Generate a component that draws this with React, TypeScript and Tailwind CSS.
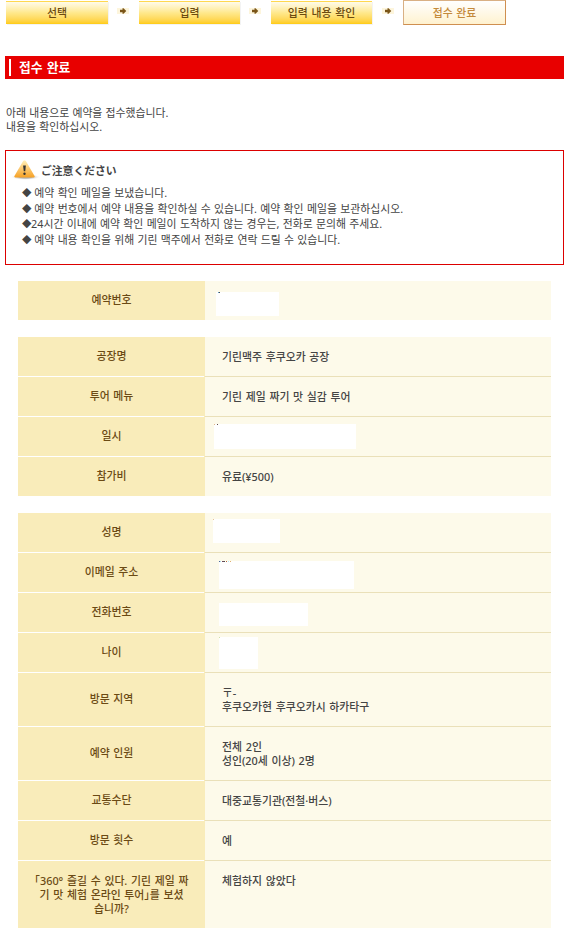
import { clsx } from "clsx"

type Speck = { x: number; w: number; fill: string }

type Row = {
  label: string[]
  lines?: string[]
  mask?: string
  specks?: Speck[]
  height: string
  top?: boolean
}

const reservation: Row[] = [
  {
    label: ["예약번호"],
    mask: "ml-[11px] mt-[11px] w-[63px] h-6",
    specks: [{ x: 2, w: 1, fill: "#5f9dc4" }, { x: 3, w: 1, fill: "#4b4b4b" }],
    height: "h-[39px]",
  },
]

const tour: Row[] = [
  { label: ["공장명"], lines: ["기린맥주 후쿠오카 공장"], height: "h-10" },
  { label: ["투어 메뉴"], lines: ["기린 제일 짜기 맛 실감 투어"], height: "h-10" },
  {
    label: ["일시"],
    mask: "ml-[9px] mt-[7px] w-[142px] h-[25px]",
    specks: [{ x: 0, w: 1, fill: "#e0b58a" }, { x: 3, w: 1, fill: "#5b4b4b" }],
    height: "h-10",
  },
  { label: ["참가비"], lines: ["유료(¥500)"], height: "h-[39px]" },
]

const visitor: Row[] = [
  {
    label: ["성명"],
    mask: "ml-2 mt-1.5 w-[67px] h-6",
    specks: [{ x: 0, w: 1, fill: "#e8c49a" }],
    height: "h-10",
  },
  {
    label: ["이메일 주소"],
    mask: "ml-3.5 mt-2 w-[135px] h-7",
    specks: [
      { x: 0, w: 1, fill: "#4b6b9b" },
      { x: 1, w: 1, fill: "#b5e3f2" },
      { x: 3, w: 2, fill: "#6b4b5b" },
      { x: 5, w: 1, fill: "#4b4b4b" },
      { x: 7, w: 1, fill: "#b5673b" },
      { x: 9, w: 1, fill: "#b5e9f2" },
      { x: 11, w: 1, fill: "#e0b070" },
    ],
    height: "h-10",
  },
  { label: ["전화번호"], mask: "ml-3.5 mt-2.5 w-[89px] h-[23px]", height: "h-10" },
  {
    label: ["나이"],
    mask: "ml-3.5 mt-1 w-[39px] h-8",
    specks: [{ x: 0, w: 1, fill: "#cfe0a8" }],
    height: "h-10",
  },
  { label: ["방문 지역"], lines: ["〒-", "후쿠오카현 후쿠오카시 하카타구"], height: "h-[54px]" },
  { label: ["예약 인원"], lines: ["전체 2인", "성인(20세 이상) 2명"], height: "h-[54px]" },
  { label: ["교통수단"], lines: ["대중교통기관(전철·버스)"], height: "h-10" },
  { label: ["방문 횟수"], lines: ["예"], height: "h-10" },
  {
    label: ["「360° 즐길 수 있다. 기린 제일 짜", "기 맛 체험 온라인 투어」를 보셨", "습니까?"],
    lines: ["체험하지 않았다"],
    height: "h-[67px]",
    top: true,
  },
]

const notices = [
  " 예약 확인 메일을 보냈습니다.",
  " 예약 번호에서 예약 내용을 확인하실 수 있습니다. 예약 확인 메일을 보관하십시오.",
  "24시간 이내에 예약 확인 메일이 도착하지 않는 경우는, 전화로 문의해 주세요.",
  " 예약 내용 확인을 위해 기린 맥주에서 전화로 연락 드릴 수 있습니다.",
]

function Step({ label, width }: { label: string; width: string }) {
  return (
    <div
      className={clsx(
        "mt-px flex h-[23px] items-center justify-center border-t border-[#ffd84f] bg-linear-to-b from-[#fffbea] via-[#ffe88a] to-[#ffcc0c] pb-px font-medium text-[#6b4a10] shadow-[1px_1px_0_#f3f3f3]",
        width
      )}
    >
      {label}
    </div>
  )
}

function Arrow({ className }: { className: string }) {
  return (
    <svg className={clsx("mt-2 h-1.5 w-3 shrink-0", className)} viewBox="0 0 12 6">
      <rect width="12" height="6" fill="#fdf5dc" />
      <path d="M3 1.7h2.5V0.2h1L9.3 3 6.5 5.8h-1V4.3H3z" fill="#7a5518" />
    </svg>
  )
}

function WarningIcon() {
  return (
    <svg className="h-6 w-[31px] shrink-0" viewBox="0 0 31 24">
      <defs>
        <linearGradient id="sign" x1="0" y1="0" x2="0" y2="1">
          <stop offset="0" stopColor="#ffeab0" />
          <stop offset="1" stopColor="#f7a52c" />
        </linearGradient>
        <radialGradient id="ground">
          <stop offset="0.4" stopColor="#aaa" />
          <stop offset="1" stopColor="#fff" stopOpacity="0" />
        </radialGradient>
      </defs>
      <ellipse cx="15.5" cy="19" rx="15" ry="3" fill="url(#ground)" />
      <path
        d="M14 3.5 5.3 18.5h18.4L15 3.5z"
        fill="url(#sign)"
        stroke="url(#sign)"
        strokeWidth="2"
        strokeLinejoin="round"
      />
      <path d="M13.1 7.5h2.8l-.7 5.8h-1.4z" fill="#333" />
      <circle cx="14.5" cy="15.8" r="1.2" fill="#333" />
    </svg>
  )
}

function DetailTable({ rows, className }: { rows: Row[]; className: string }) {
  return (
    <div className={clsx("ml-[18px] w-[533px]", className)}>
      {rows.map((row, i) => {
        const last = i === rows.length - 1
        return (
          <div key={row.label[0]} className={clsx("flex", row.height)}>
            <div className="flex w-[187px] shrink-0 flex-col bg-[#f9ecba] font-medium text-[#6b4a14]">
              <div
                className={clsx(
                  "flex flex-1 flex-col items-center [font-feature-settings:'halt']",
                  row.top ? "pt-[13px]" : "justify-center pb-px"
                )}
              >
                {row.label.map((line) => (
                  <span key={line} className="whitespace-nowrap">{line}</span>
                ))}
              </div>
              {!last && <div className="h-px w-[186px] bg-white" />}
            </div>
            <div
              className={clsx(
                "flex flex-1 bg-[#fdfaea] font-medium text-[#444]",
                !last && "border-b border-[#eae0b9]"
              )}
            >
              {row.mask ? (
                <div className={clsx("bg-white", row.mask)}>
                  {row.specks && (
                    <svg className="block h-px w-4" viewBox="0 0 16 1" shapeRendering="crispEdges">
                      {row.specks.map((s) => (
                        <rect key={s.x} x={s.x} width={s.w} height="1" fill={s.fill} />
                      ))}
                    </svg>
                  )}
                </div>
              ) : (
                <div
                  className={clsx(
                    "flex flex-col pl-[17px]",
                    row.top ? "pt-[13px]" : "justify-center pt-px"
                  )}
                >
                  {row.lines?.map((line) => (
                    <span key={line} className="whitespace-nowrap">{line}</span>
                  ))}
                </div>
              )}
            </div>
          </div>
        )
      })}
    </div>
  )
}

export default function App() {
  return (
    <div className="h-[936px] w-[570px] overflow-hidden bg-white font-['Noto_Sans','Noto_Sans_CJK_KR',sans-serif] text-[10.87px] leading-[14px] [word-spacing:0.9px]">
      <div className="flex h-[25px] items-start pl-1.5">
        <Step label="선택" width="w-[102px]" />
        <Arrow className="ml-[9px]" />
        <Step label="입력" width="ml-2.5 w-[101px]" />
        <Arrow className="ml-[9px]" />
        <Step label="입력 내용 확인" width="ml-2.5 w-[101px]" />
        <Arrow className="ml-2.5" />
        <div className="ml-[9px] flex h-[25px] w-[103px] items-center justify-center border border-[#cf8f50] border-t-[#d9b084] border-l-[#d9b084] bg-linear-to-b from-white to-[#fff2cf] font-medium text-[#c48a3c]">
          접수 완료
        </div>
      </div>

      <div className="mt-[31px] ml-[5px] flex h-[23px] w-[559px] items-center bg-[#e80000] pl-1">
        <div className="h-[17px] w-0.5 bg-white" />
        <h1 className="ml-2 pb-0.5 text-[12.8px] font-bold text-white">접수 완료</h1>
      </div>

      <div className="mt-[27px] ml-1.5 text-[#444] [word-spacing:0.4px]">
        <p>아래 내용으로 예약을 접수했습니다.</p>
        <p>내용을 확인하십시오.</p>
      </div>

      <div className="mt-4 ml-[5px] h-[115px] w-[559px] border border-[#dc0000] pt-[7px] pl-1">
        <div className="flex items-center">
          <WarningIcon />
          <span className="font-['Noto_Sans_CJK_JP',sans-serif] text-[10.8px] font-bold text-[#444]">
            ご注意ください
          </span>
        </div>
        <ul className="mt-[3px] ml-3 leading-[15.7px] text-[#444] [word-spacing:0.5px]">
          {notices.map((n) => (
            <li key={n} className="flex whitespace-pre">
              <span className="w-[9px] text-[9.5px]">◆</span>
              {n}
            </li>
          ))}
        </ul>
      </div>

      <DetailTable rows={reservation} className="mt-4" />
      <DetailTable rows={tour} className="mt-[17px]" />
      <DetailTable rows={visitor} className="mt-[17px]" />
    </div>
  )
}
